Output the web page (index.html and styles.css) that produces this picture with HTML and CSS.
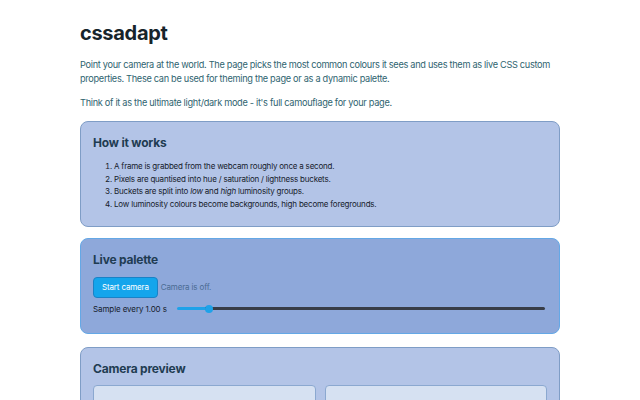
FILE: index.html
```html
<!DOCTYPE html>
<html>
<head>
    <title>cssadapt</title>
    <meta name="viewport" content="width=device-width, initial-scale=1">
    <link rel="stylesheet" href="styles.css">
</head>
<body>
    <main class="page">
        <h1>cssadapt</h1>
        <p class="intro">Point your camera at the world. The page picks the most common colours it sees and uses them as live CSS custom properties. These can be used for theming the page or as a dynamic palette.</p>
        <p class="intro">Think of it as the ultimate light/dark mode - it's full camouflage for your page.</p>

        <section class="card">
            <h2>How it works</h2>
            <ol class="steps">
                <li>A frame is grabbed from the webcam roughly once a second.</li>
                <li>Pixels are quantised into hue / saturation / lightness buckets.</li>
                <li>Buckets are split into <em>low</em> and <em>high</em> luminosity groups.</li>
                <li>Low luminosity colours become backgrounds, high become foregrounds.</li>
            </ol>
        </section>

        <section class="card card-live">
            <h2>Live palette</h2>
            <div class="controls">
                <button class="btn" id="start">Start camera</button>
                <span class="status" id="status">Camera is off.</span>
            </div>
            <div class="sample">
                <label for="rate">Sample every <span id="rate-value">1.00</span> s</label>
                <input type="range" id="rate" min="0.25" max="10" step="0.25" value="1" style="--fill: 7.7%">
            </div>
        </section>

        <section class="card card-preview">
            <h2>Camera preview</h2>
            <div class="preview">
                <div class="frame"></div>
                <div class="frame"></div>
            </div>
        </section>
    </main>

    <script>
        var rate = document.getElementById('rate');
        var rateValue = document.getElementById('rate-value');

        rate.addEventListener('input', function() {
            var pct = (rate.value - rate.min) / (rate.max - rate.min) * 100;
            rate.style.setProperty('--fill', pct + '%');
            rateValue.textContent = Number(rate.value).toFixed(2);
        });
    </script>
</body>
</html>
```

FILE: styles.css
```css
body {
    font-family: Inter, "Noto Sans", sans-serif;
    background-color: #ffffff;
    color: #1b2a33;
    margin: 0;
    padding: 0;
}
.page {
    max-width: 480px;
    margin: 0 auto;
    padding: 21px 0 20px;
}
h1 {
    font-size: 20px;
    font-weight: 700;
    letter-spacing: -0.3px;
    margin: 0 0 13px;
    color: #17242b;
}
.intro {
    font-size: 9.2px;
    line-height: 14px;
    letter-spacing: -0.3px;
    color: #2f6470;
    margin: 0 0 10px;
}
.card {
    background-color: #b3c4e7;
    border: 1px solid #7f9dc6;
    border-radius: 8px;
    padding: 13px 12px 15px;
    margin-top: 11px;
}
.card-live {
    background-color: #8ea8da;
    border-color: #64a8e6;
    padding-bottom: 19px;
}
.card-preview {
    margin-top: 13px;
}
h2 {
    font-size: 12px;
    font-weight: 700;
    letter-spacing: -0.2px;
    color: #1f3c52;
    margin: 0 0 10px;
}
.steps {
    margin: 0;
    padding-left: 21px;
    font-size: 8px;
    line-height: 12.7px;
    letter-spacing: -0.2px;
    color: #15202b;
}
.controls {
    display: flex;
    align-items: center;
    gap: 3px;
}
.btn {
    font-family: inherit;
    font-size: 8px;
    letter-spacing: -0.15px;
    color: #ffffff;
    background-color: #14a5ec;
    border: 1px solid #1a82c6;
    border-radius: 4px;
    padding: 0 8px;
    height: 21px;
    cursor: pointer;
}
.status {
    font-size: 8px;
    letter-spacing: -0.15px;
    color: #4a6b92;
}
.sample {
    display: flex;
    align-items: center;
    gap: 10px;
    margin-top: 6px;
    font-size: 8px;
    letter-spacing: -0.1px;
    color: #15202b;
}
input[type="range"] {
    -webkit-appearance: none;
    appearance: none;
    flex: 1;
    height: 3px;
    margin: 0 2px 0 0;
    border-radius: 2px;
    background: linear-gradient(to right, #1ea2e9 var(--fill), #383d48 var(--fill));
    outline: none;
}
input[type="range"]::-webkit-slider-thumb {
    -webkit-appearance: none;
    appearance: none;
    width: 8px;
    height: 8px;
    border-radius: 50%;
    background: #1ea2e9;
    cursor: pointer;
}
.preview {
    display: grid;
    grid-template-columns: 1fr 1fr;
    gap: 9px;
    margin-top: -1px;
}
.frame {
    height: 120px;
    background-color: #d6e1f2;
    border: 1px solid #8ba8d0;
    border-radius: 4px;
}
```
